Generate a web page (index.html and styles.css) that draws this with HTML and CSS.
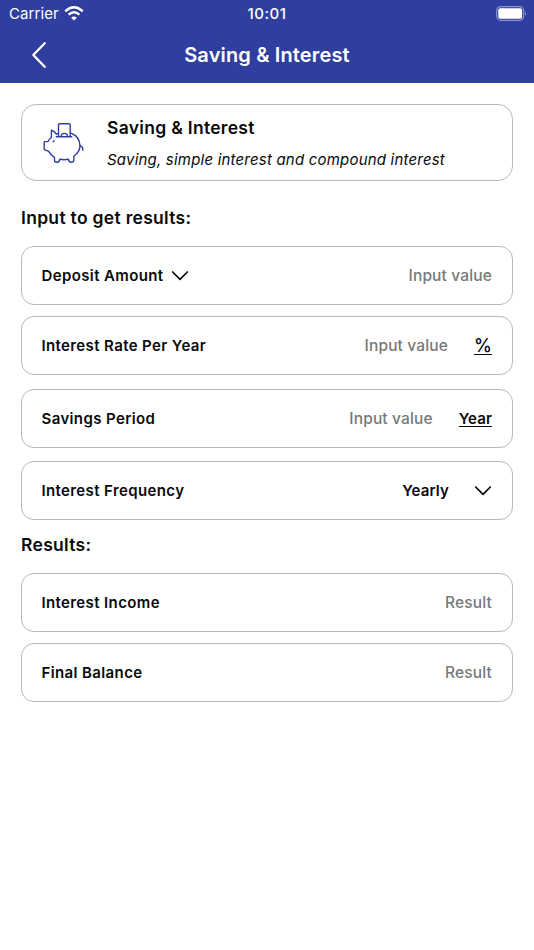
FILE: index.html
```html
<!DOCTYPE html>
<html lang="en">

<head>
  <meta charset="UTF-8">
  <meta name="viewport" content="width=device-width, initial-scale=1.0">
  <title>Saving &amp; Interest</title>
  <link rel="stylesheet" href="styles.css">
</head>

<body>
  <header class="header">
    <div class="status-bar">
      <div class="carrier">
        <span class="carrier-name">Carrier</span>
        <svg width="20" height="15" viewBox="0 0 20 15" fill="#fff">
          <path d="M10 14.6 L7.1 11.7 Q10 9.2 12.9 11.7 Z" />
          <path d="M4.6 8.7 Q10 3.8 15.4 8.7" fill="none" stroke="#fff" stroke-width="2.3" />
          <path d="M1.2 5.3 Q10 -2.7 18.8 5.3" fill="none" stroke="#fff" stroke-width="2.3" />
        </svg>
      </div>
      <span class="time">10:01</span>
      <svg class="battery" width="32" height="15" viewBox="0 0 32 15">
        <rect x="0.7" y="0.7" width="27" height="13.6" rx="4" fill="none" stroke="#8d95cd" stroke-width="1.2" />
        <rect x="2.3" y="2.3" width="23.8" height="10.4" rx="2" fill="#fff" />
        <path d="M29.2 5 Q31 7.5 29.2 10 Z" fill="#8d95cd" />
      </svg>
    </div>
    <div class="nav-bar">
      <svg class="back" width="16" height="28" viewBox="0 0 16 28">
        <path d="M13.7 2.2 L2.3 14 L13.7 25.8" />
      </svg>
      <h1>Saving &amp; Interest</h1>
    </div>
  </header>

  <main class="container">
    <section class="intro">
      <svg class="pig" width="42" height="42" viewBox="0 0 42 42">
        <!-- note going into the slot -->
        <path d="M15.5 14.5 V2.9 Q15.5 1.8 16.6 1.8 H26.1 Q27.2 1.8 27.2 2.9 V14.5" />
        <path d="M13.3 14.8 H28.7 M18 14.6 Q18 11.4 21.3 11.4 Q24.6 11.4 24.6 14.6" />
        <!-- body -->
        <path d="M14.5 11.8 L13.4 12.2 Q11.5 8.8 8.4 8.2 V15.5 Q5.8 17.3 5 19.6 H1.9 Q1.2 19.6 1.2 20.3 V26.9 Q1.2 27.7 2 28 L5.5 29.1 Q7.6 33 11.5 35.3 V38.3 Q11.5 40.3 14 40.3 Q16.3 40.3 16.8 37.3 Q21.3 38.2 25.5 37.3 Q26 40.3 28.3 40.3 Q30.8 40.3 30.8 38.3 V34.3 Q37 29.8 37 23.8 Q36.6 14.5 28 11.2" />
        <path d="M37 24 Q40.4 24.5 39.7 28" />
        <circle cx="10.6" cy="19.3" r="0.4" />
      </svg>
      <div class="intro-text">
        <h2>Saving &amp; Interest</h2>
        <p>Saving, simple interest and compound interest</p>
      </div>
    </section>

    <h3 class="title">Input to get results:</h3>
    <div class="row">
      <span class="label">Deposit Amount</span>
      <svg class="arrow" width="18" height="12" viewBox="0 0 18 12">
        <path d="M1.7 2 L9 9.3 L16.3 2" />
      </svg>
      <span class="value">Input value</span>
    </div>
    <div class="row rate">
      <span class="label">Interest Rate Per Year</span>
      <span class="value">Input value</span>
      <span class="unit percent">%</span>
    </div>
    <div class="row period">
      <span class="label">Savings Period</span>
      <span class="value">Input value</span>
      <span class="unit">Year</span>
    </div>
    <div class="row frequency">
      <span class="label">Interest Frequency</span>
      <span class="value selected">Yearly</span>
      <svg class="arrow" width="18" height="12" viewBox="0 0 18 12">
        <path d="M1.7 2 L9 9.3 L16.3 2" />
      </svg>
    </div>

    <h3 class="title results">Results:</h3>
    <div class="row">
      <span class="label">Interest Income</span>
      <span class="value">Result</span>
    </div>
    <div class="row balance">
      <span class="label">Final Balance</span>
      <span class="value">Result</span>
    </div>
  </main>
</body>

</html>
```
FILE: styles.css
```css
* {
  box-sizing: border-box;
}

body {
  margin: 0;
  background-color: #fff;
  color: #0a0a0a;
  font-family: Inter, "Liberation Sans", sans-serif;
}

h1, h2, h3, p {
  margin: 0;
  font-weight: 600;
}

svg {
  flex: none;
}

.header {
  height: 83px;
  background-color: #303e9f;
  color: #fff;
}

.status-bar {
  display: grid;
  grid-template-columns: 1fr auto 1fr;
  align-items: center;
  height: 27px;
  padding: 0 7px 0 9px;
}

.carrier {
  display: flex;
  align-items: center;
  gap: 5px;
  font-size: 15px;
  letter-spacing: 0.1px;
}

.time {
  margin-right: 2px;
  font-size: 15px;
  font-weight: 500;
  letter-spacing: 0.5px;
}

.battery {
  justify-self: end;
  margin-right: -1px;
}

.nav-bar {
  display: grid;
  grid-template-columns: 1fr auto 1fr;
  align-items: center;
  height: 56px;
  padding: 0 31px;
}

.nav-bar h1 {
  font-size: 20px;
  letter-spacing: 0.15px;
}

.back path {
  fill: none;
  stroke: #fff;
  stroke-width: 2.3;
  stroke-linecap: round;
  stroke-linejoin: round;
}

.container {
  padding: 21px 21px 0;
}

.intro {
  display: flex;
  align-items: center;
  height: 77px;
  padding-left: 21px;
  border: 1px solid #b9b9b9;
  border-radius: 15px;
}

.pig {
  fill: none;
  stroke: #303e9f;
  stroke-width: 1.4;
  stroke-linejoin: round;
  stroke-linecap: round;
}

.intro-text {
  margin-left: 22px;
  padding-top: 2px;
}

.intro h2 {
  font-size: 17.5px;
  line-height: 22px;
  letter-spacing: 0.3px;
}

.intro p {
  margin-top: 10px;
  font-size: 15px;
  font-style: italic;
  font-weight: 400;
  line-height: 22px;
  letter-spacing: 0.2px;
}

.title {
  margin: 26px 0 17px;
  font-size: 17.5px;
  line-height: 22px;
  letter-spacing: 0.3px;
}

.row {
  display: flex;
  align-items: center;
  height: 59px;
  padding: 0 20px 0 19.5px;
  border: 1px solid #b9b9b9;
  border-radius: 13px;
  font-size: 15px;
  font-weight: 600;
  letter-spacing: 0.38px;
}

.rate {
  margin-top: 10.5px;
}

.period {
  margin-top: 14.5px;
}

.frequency {
  margin-top: 13px;
}

.balance {
  margin-top: 11px;
}

.arrow {
  margin-left: 8px;
}

.arrow path {
  fill: none;
  stroke: #0a0a0a;
  stroke-width: 1.7;
  stroke-linecap: round;
  stroke-linejoin: round;
}

.value {
  margin-left: auto;
  color: #787878;
  font-size: 15.5px;
  font-weight: 500;
  letter-spacing: 0.15px;
}

.selected {
  color: #0a0a0a;
  font-size: 15px;
  font-weight: 600;
}

.unit {
  margin-left: 26px;
  border-bottom: 1.5px solid #0a0a0a;
  line-height: 15px;
  letter-spacing: 0.1px;
}

.percent {
  padding-top: 2px;
  font-size: 18px;
  font-weight: 500;
  line-height: 16px;
}

.frequency .arrow {
  margin-left: 25px;
}

.results {
  margin: 14px 0 17px;
}
```
